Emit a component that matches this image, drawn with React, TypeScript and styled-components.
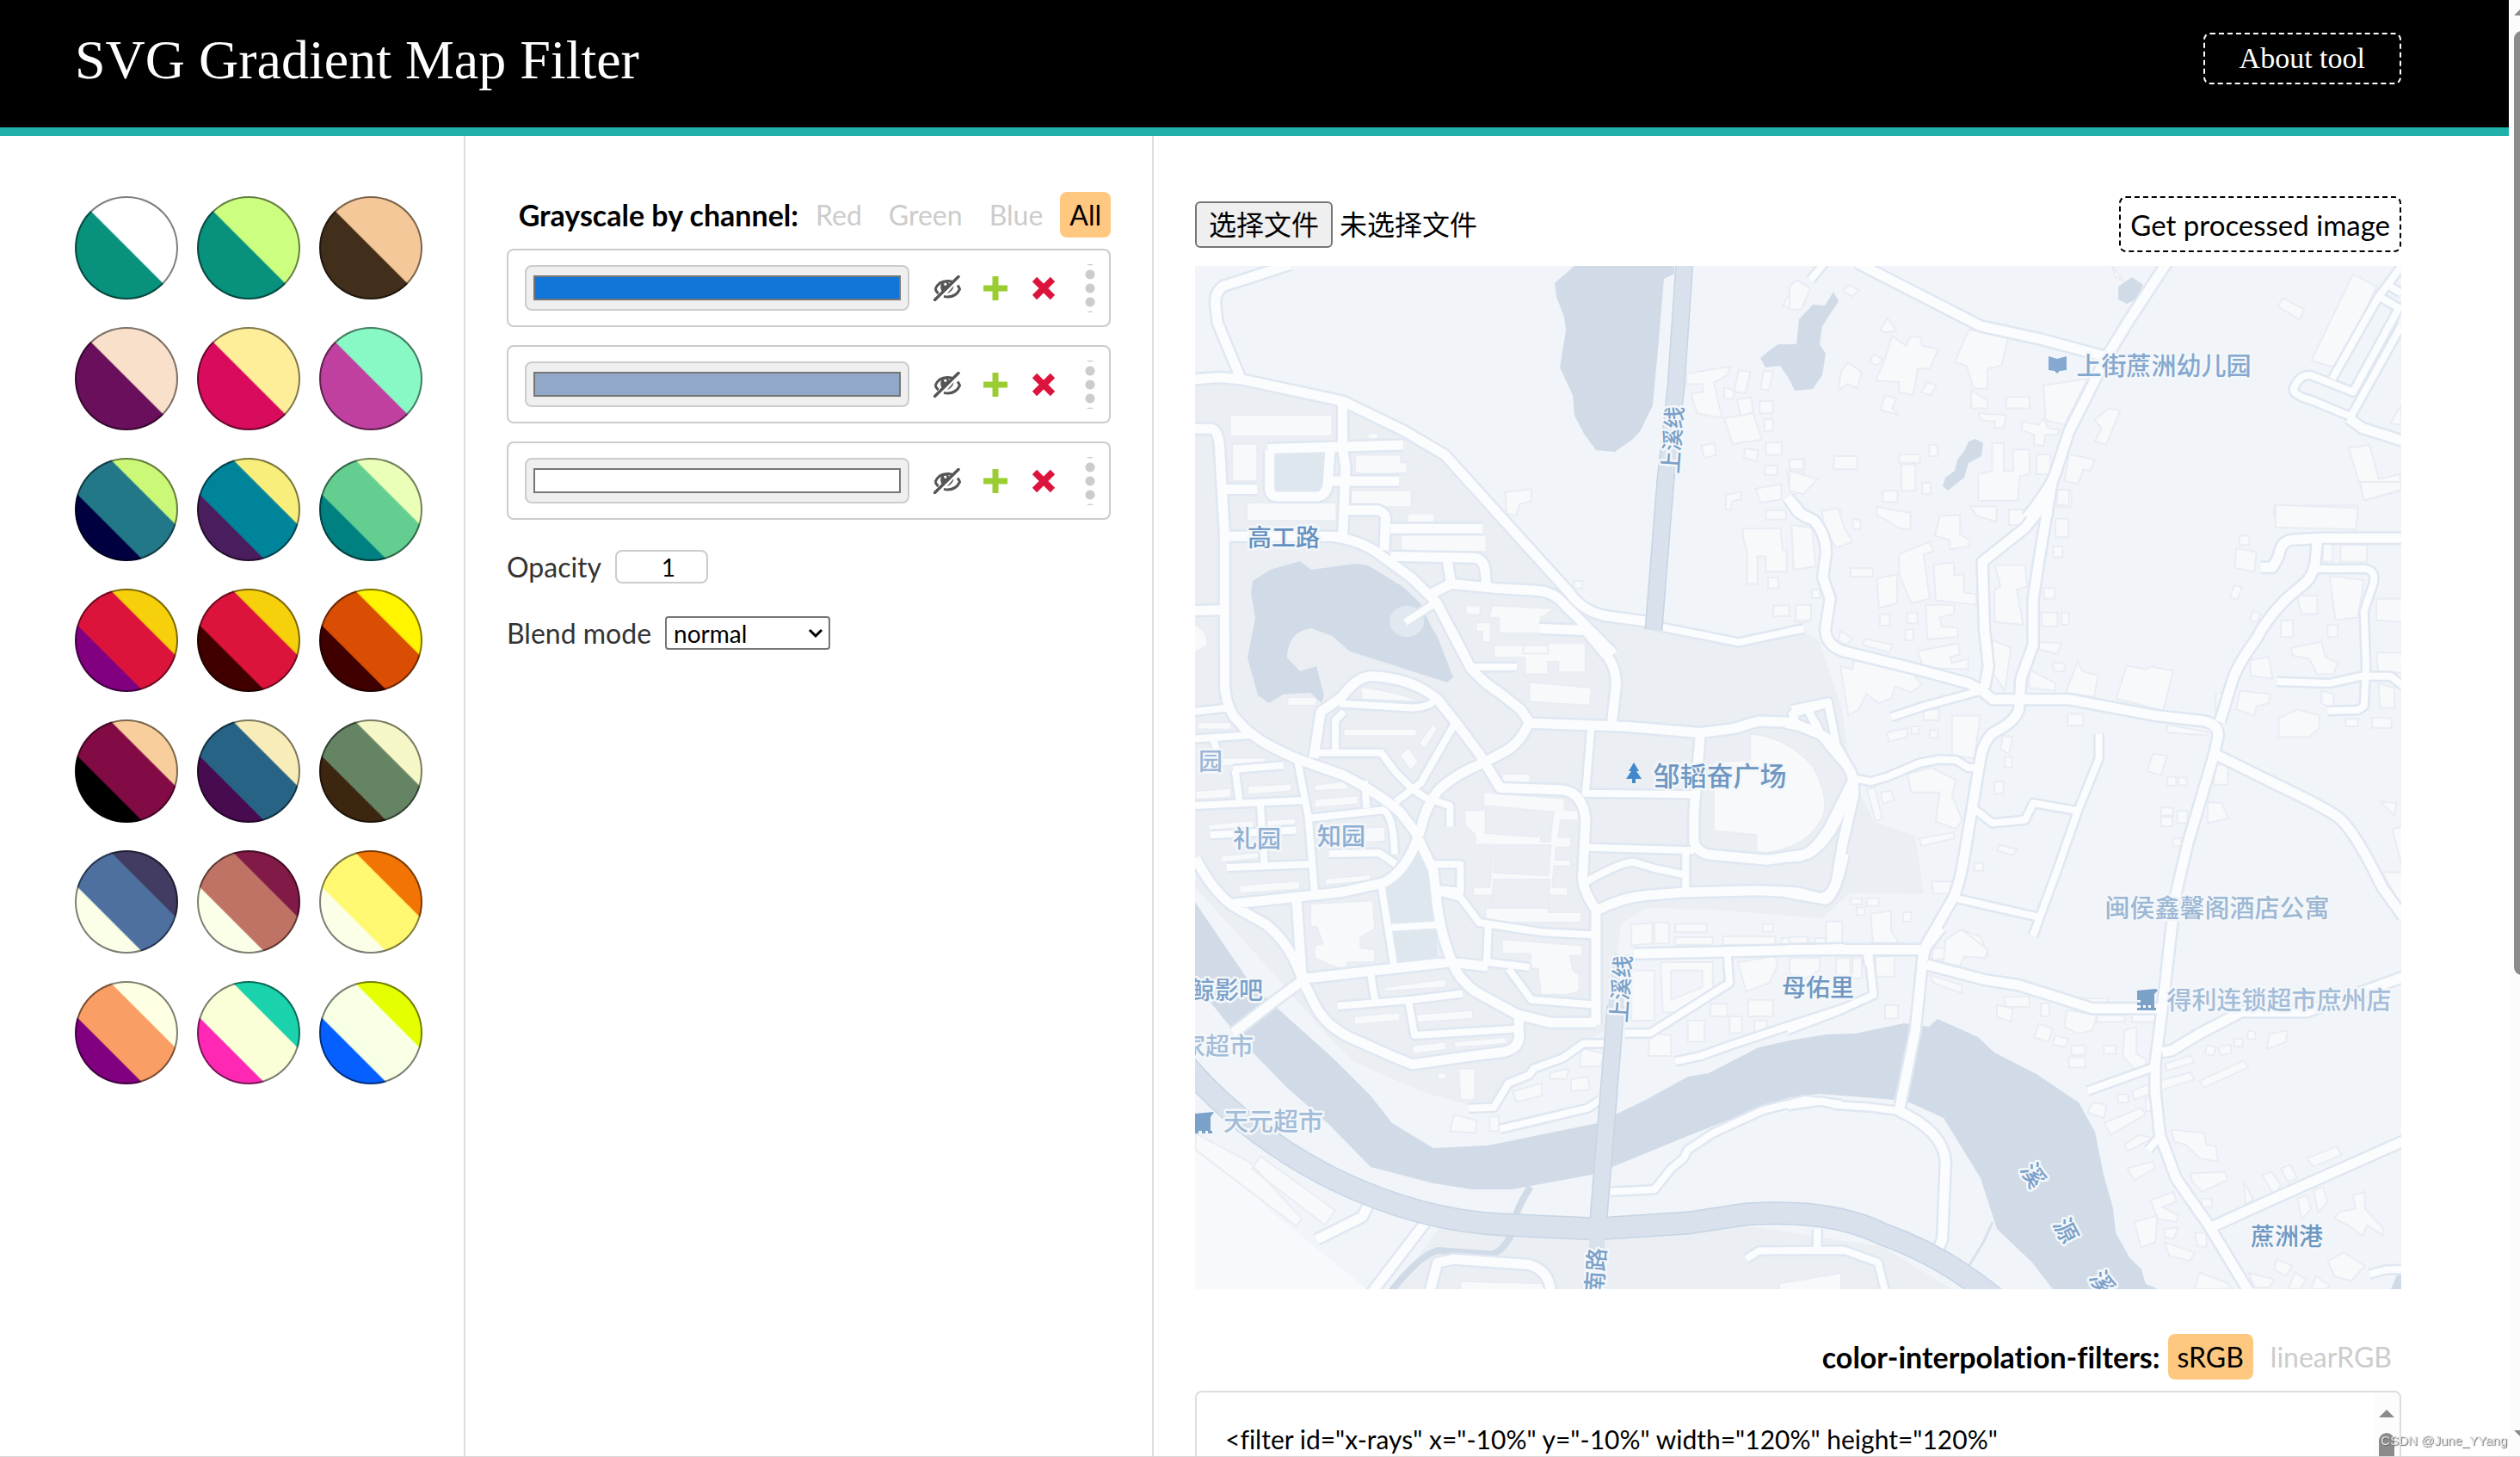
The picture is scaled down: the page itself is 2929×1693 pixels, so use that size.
import React, { useState } from 'react';
import styled, { createGlobalStyle } from 'styled-components';

const sans = '"Lato", "Noto Sans CJK SC", sans-serif';
const serif = '"Liberation Serif", serif';

const GlobalStyle = createGlobalStyle`
  *, *::before, *::after { box-sizing: border-box; }
  html, body { margin: 0; height: 100%; }
  body { background: #fff; color: #000; font: 32px/40px ${sans}; font-variant-ligatures: none; overflow: hidden; }
  button, input, select, textarea { font-family: inherit; font-variant-ligatures: none; color: inherit; margin: 0; }
`;

const Shell = styled.div`
  display: flex;
  height: 100vh;
  border-bottom: 1px solid #d8d8d8;
`;

const Page = styled.div`
  flex: 1;
  min-width: 0;
  display: flex;
  flex-direction: column;
`;

const Header = styled.header`
  display: flex;
  justify-content: space-between;
  align-items: flex-start;
  padding: 30px 125px 38px 87px;
  background: #000;
  color: #fff;
  border-bottom: 10px solid #20b2aa;
  font-family: ${serif};
`;

const Title = styled.h1`
  margin: 0;
  font-size: 64px;
  line-height: 80px;
  font-weight: 400;
`;

const DashedButton = styled.button<{ $light?: boolean }>`
  height: ${p => (p.$light ? 60 : 65)}px;
  margin-top: ${p => (p.$light ? 8 : 0)}px;
  padding: 0 ${p => (p.$light ? 40 : 11)}px;
  border: 2px dashed currentColor;
  border-radius: 8px;
  background: none;
  color: ${p => (p.$light ? '#fff' : '#000')};
  font-family: ${p => (p.$light ? serif : 'inherit')};
  font-size: ${p => (p.$light ? 34 : 33)}px;
  line-height: 40px;
`;

const Columns = styled.main`
  flex: 1;
  min-height: 0;
  display: grid;
  grid-template-columns: 541px 800px minmax(0, 1fr);
`;

const Presets = styled.section`
  display: grid;
  grid-template-columns: repeat(3, 120px);
  grid-auto-rows: 120px;
  gap: 32px 22px;
  align-content: start;
  padding: 70px 0 0 87px;
  border-right: 2px solid #ddd;
`;

const Swatch = styled.button<{ $fill: string }>`
  padding: 0;
  border: 2px solid rgba(0, 0, 0, 0.5);
  border-radius: 50%;
  background: ${p => p.$fill} border-box;
`;

const Controls = styled.section`
  padding: 65px 48px 0;
  border-right: 2px solid #ddd;
`;

const OptionRow = styled.div`
  display: flex;
  justify-content: flex-end;
  align-items: center;
  gap: 9px;
  margin-bottom: 13px;
`;

const OptionTitle = styled.strong`
  font-size: 34px;
  font-weight: 700;
`;

const Pill = styled.button<{ $active: boolean }>`
  height: 53px;
  padding: 0 11px;
  border: 0;
  border-radius: 8px;
  background: ${p => (p.$active ? '#ffc880' : 'transparent')};
  color: ${p => (p.$active ? '#000' : '#ccc')};
  font-size: 32px;
  line-height: 40px;
`;

const ColorList = styled.ul`
  display: grid;
  gap: 21px;
  margin: 0 0 35px;
  padding: 0;
  list-style: none;
`;

const ColorItem = styled.li`
  display: flex;
  align-items: center;
  height: 91px;
  padding: 0 14px 0 19px;
  border: 2px solid #ccc;
  border-radius: 8px;
`;

const ColorInput = styled.input`
  flex: 1;
  min-width: 0;
  height: 53px;
  padding: 0;
  margin-right: 16px;
  border: 2px solid #ccc;
  border-radius: 8px;
  background: #efefef;
  &::-webkit-color-swatch-wrapper { padding: 10px 8px; }
  &::-webkit-color-swatch { border: 2px solid #767676; border-radius: 0; }
`;

const IconButton = styled.button`
  display: grid;
  place-items: center;
  width: 56px;
  height: 56px;
  padding: 0;
  border: 0;
  background: none;
`;

const Grip = styled.span`
  width: 16px;
  height: 56px;
  margin-left: 18px;
  background: radial-gradient(circle, #ccc 5px, transparent 6px) center / 16px 16px;
`;

const Field = styled.div`
  display: flex;
  align-items: center;
  gap: 16px;
  height: 39px;
  margin-bottom: 38px;
  color: #333;
`;

const NumberInput = styled.input`
  width: 108px;
  height: 39px;
  padding: 0 36px 0 8px;
  border: 2px solid #ccc;
  border-radius: 8px;
  background: #fff;
  color: #000;
  font-size: 28px;
  text-align: right;
  appearance: textfield;
  &::-webkit-inner-spin-button { appearance: none; margin: 0; }
`;

const SelectBox = styled.span`
  display: grid;
  align-items: center;
  justify-items: end;
  & > * { grid-area: 1 / 1; }
  & > svg { margin-right: 8px; pointer-events: none; }
`;

const Select = styled.select`
  width: 192px;
  height: 39px;
  padding: 0 8px;
  border: 2px solid #767676;
  border-radius: 4px;
  background: #fff;
  color: #000;
  font-size: 28px;
  appearance: none;
`;

const Preview = styled.section`
  display: flex;
  flex-direction: column;
  min-height: 0;
  padding: 70px 125px 0 48px;
`;

const FileRow = styled.div`
  display: flex;
  justify-content: space-between;
  align-items: center;
  margin-bottom: 16px;
`;

const FilePicker = styled.label`
  display: flex;
  align-items: center;
  gap: 8px;
  input { position: absolute; width: 1px; height: 1px; opacity: 0; }
`;

const FileFace = styled.span`
  padding: 5px 14px;
  border: 2px solid #767676;
  border-radius: 6px;
  background: #efefef;
`;

const MapPicture = styled.svg`
  display: block;
  flex: none;
  width: 100%;
  height: auto;
  margin-bottom: 52px;
  font-family: "Noto Sans CJK SC", sans-serif;
`;

const CodeBox = styled.div`
  flex: 1;
  min-height: 0;
  display: flex;
  border: 2px solid #ddd;
  border-bottom: 0;
  border-radius: 8px 8px 0 0;
  overflow: hidden;
`;

const Code = styled.textarea`
  flex: 1;
  height: 160px;
  padding: 34px 33px 0;
  border: 0;
  outline: 0;
  resize: none;
  background: #fff;
  color: #000;
  font-size: 30px;
  line-height: 40px;
`;

const CodeScroll = styled.div`
  display: flex;
  flex-direction: column;
  align-items: center;
  gap: 18px;
  width: 30px;
  padding-top: 20px;
  background: #fcfcfc;
  & > * { flex: none; }
`;

const Thumb = styled.span`
  width: 18px;
  height: 200px;
  border-radius: 9px;
  background: #8b8b8b;
`;

const PageScroll = styled.div`
  display: flex;
  flex-direction: column;
  align-items: flex-start;
  gap: 18px;
  width: 13px;
  padding: 9px 0 21px 6px;
  overflow: hidden;
  background: #fcfcfc;
  & > svg { flex: none; }
`;

const PageThumb = styled.span`
  flex: none;
  width: 18px;
  height: 66%;
  margin-bottom: auto;
  border-radius: 9px;
  background: #8b8b8b;
`;

const Watermark = styled.span`
  position: fixed;
  right: 15px;
  bottom: 9px;
  color: #e4e4e4;
  font: 15px/20px "Liberation Sans", sans-serif;
  text-shadow: 1px 1px 1px #666;
`;

const presets: string[][] = [
  ['#08917c', '#ffffff'], ['#08917c', '#ccff80'], ['#412e1b', '#f5c899'],
  ['#6a0f5b', '#f8e0ca'], ['#d80b5c', '#ffee99'], ['#bf409f', '#88f8c4'],
  ['#000040', '#227788', '#ccf878'], ['#4a1d5e', '#008499', '#f8ee7c'], ['#008080', '#63ce90', '#eaffb8'],
  ['#800080', '#dc143c', '#f7d00c'], ['#400000', '#dc143c', '#f7d00c'], ['#400000', '#da4e04', '#fff500'],
  ['#000000', '#820a45', '#f8cf9c'], ['#480b50', '#266384', '#f8edb8'], ['#3d2610', '#648464', '#f5f7c6'],
  ['#fbffe8', '#4d709f', '#423b62'], ['#fbffe8', '#bf7364', '#821a48'], ['#fbffe8', '#fff870', '#f27405'],
  ['#800080', '#f99e64', '#ffffe4'], ['#ff28b4', '#faffd8', '#1ad2ac'], ['#0560ff', '#f7ffe4', '#e4ff00'],
];

const stripes = (c: string[]) =>
  c.length === 2
    ? `linear-gradient(45deg, ${c[0]} 50%, ${c[1]} 51%)`
    : `linear-gradient(45deg, ${c[0]} 33%, ${c[1]} 34%, ${c[1]} 66%, ${c[2]} 67%)`;

const HideIcon = () => (
  <svg width="32" height="30" viewBox="0 0 32 30" fill="none" stroke="#555">
    <path d="M2 16C5 9 10 6.500 16 6.500c2 0 4 .3 6 1M28 11.500c1 1.300 2 2.800 2.500 4.500-3 6.500-8 9-14 9-1.600 0-3-.2-4.500-.6M2 16c1 2 2 3.600 3.600 5" strokeWidth="3" />
    <path d="M9 9.500c-1.400 4-1 7.500 1.500 10l8-9.500a5 5 0 0 0-5-3c-2 0-3.500 1-4.500 2.500z" fill="#555" stroke="none" />
    <path d="M23.500 9.500c.6 5-2 9.500-7.500 11.500l7.500-9" fill="#555" stroke="none" />
    <path d="M12.500 11l2.500-1.500" stroke="#fff" strokeWidth="3" />
    <path d="M1.500 28.500 29 1.500" strokeWidth="3.500" strokeLinecap="round" />
    <path d="M6 28 29.500 5" stroke="#fff" strokeWidth="1.500" />
  </svg>
);
const PlusIcon = () => (
  <svg width="28" height="28" viewBox="0 0 28 28" stroke="#9acd32" strokeWidth="7">
    <path d="M14 0v28M0 14h28" />
  </svg>
);
const CrossIcon = () => (
  <svg width="28" height="28" viewBox="0 0 28 28" stroke="#dc143c" strokeWidth="7.500">
    <path d="M3.500 3.500l21 21M24.500 3.500l-21 21" />
  </svg>
);
const Triangle = ({ down }: { down?: boolean }) => (
  <svg width="18" height="9" viewBox="0 0 18 9" fill="#8b8b8b">
    <path d={down ? 'M0 0h18L9 9z' : 'M0 9h18L9 0z'} />
  </svg>
);

/* The map is surveyed in sheets; each sheet keeps its own grid and is placed by its transform. */
type Sheet = { place: string; blocks: string; pale?: string; roads: string; lanes: string };

const sheets: Sheet[] = [
  {
    place: 'translate(-49 -109) scale(.4847 .3571)',
    pale: 'M290 915H410V1020L395 1045H290z',
    blocks:
      'M185 790h245v70H185zM190 885h60v120h-60zM485 920h110v25h15v35H485zM475 1035h145v55H475zM225 1075h215v60H225zM595 1180h205v55H595zM610 1110h65v30h-65zM515 850h25v18h-25zM60 1480a45 60 0 0 1 70 60l-50 40zM750 1410h35v30h-35zM815 1410L965 1420 930 1450V1500H830V1450H805zM775 1465h35v65h-20v-35h-15zM820 1540H1040V1570H820z' +
      'M845 1040L908 1032V1070L880 1080 870 1120 848 1110zM1280 655L1385 632 1378 660 1345 685 1365 800 1305 785 1290 720 1320 715 1318 690 1280 690zM1405 645l28 5-12 70-28-5zM1465 645l22 5-10 60-20-5zM1370 700l25 10-5 30-20-5zM1400 740l35-8 5 50-30 10zM1455 745h32v40h-32zM1370 800L1440 785 1460 870 1390 885zM1465 805l22-3v38l-20 5zM1315 890l32-8 3 40-28 8zM1420 900l32 5-5 35-30-10zM1470 880h38v40h-38zM1468 955h30v30h-30zM1535 935h28v30h-28zM1520 975h40v60l-30 20zM1375 1050l35-10v25l-20 5-5 30-12-2zM1445 1030l62-15v50l-50 10zM1470 1100h48v30h-48zM1415 1160H1505L1510 1230H1520V1300H1470V1250H1450V1340H1425V1235L1415 1190zM1535 1150h33v140h-33zM1475 1320h25v35h-25zM1488 1410h38v35h-38zM1540 1415h30v50h-30zM1540 360l28 10-5 60-25 15-28-10zM1010 1330h20v25h-20z',
    roads:
      'M330 300L240 340 170 370Q148 390 150 430L155 490 210 670M90 675L160 668 215 675 455 745 600 840 700 920 740 980 1000 1370Q1030 1430 1090 1445L1200 1465M90 835H140Q158 840 160 900L172 1180V1570M172 1185H430Q500 1200 540 1240L620 1320 680 1400 745 1568M455 750V900L462 960 455 1190M275 900L600 888M280 905V1030Q280 1055 300 1056H395Q420 1050 420 1000L425 905M430 1005H590M460 1100H540Q560 1110 558 1130L555 1230M570 1160H790M570 1250L770 1255Q795 1260 797 1300L800 1350M706 1262L715 1340 670 1370M715 1340L830 1355 930 1363Q965 1370 985 1405L1105 1568M175 1032H250M90 1427L165 1425M925 1485L1045 1492',
    lanes: 'M1200 1475L1405 1530 1560 1485M680 1400L605 1465M1525 1070L1545 1110 1570 1130',
  },
  {
    place: 'translate(-9 431) scale(.4847)',
    pale: 'M545 490L580 560 595 640 600 770 495 785 475 600 510 560z',
    blocks:
      'M1350 232Q1440 240 1500 310 1545 390 1520 440 1480 510 1380 518L1365 515V475L1262 465V300L1350 295zM735 20H805V40H865V15H955V85H890V60H865V90H810V50H735zM820 108L970 122 965 165 820 155zM375 220H550V238H375zM755 328H822V350H755zM240 145H310V165H240zM415 120Q500 130 560 155L420 150zM25 205H105V222H25zM510 285L530 265 555 300 535 320zM555 255L590 208 600 220 570 268z' +
      'M665 415H710V372L905 388V415H938V440H895L890 480H920V505H885L882 535H920V550H880L875 600H912V620H870L865 660H945V685H715V650H865L870 582H735L728 650 735 620H685V600H725L735 498H690V475L665 450zM715 405V470L840 480 845 458 848 490 870 490 878 420zM740 500L735 565 865 572 872 500z' +
      'M295 640L445 632 450 700 415 720V745L450 750V780H385L380 795 350 790 305 770V740L325 735 310 695H295zM755 725L950 740 945 765 918 765 925 800 940 810V850L910 858H848L840 795H825L822 760H755zM80 290L190 290 185 305 80 310zM20 370L105 362V385L20 390zM145 358L250 352V370L145 378zM50 450L160 440V460L50 465zM190 440L260 435V450L190 455zM80 525L185 515V530L80 540zM125 595L270 585V605L125 615zM305 355L385 345V365L305 370zM305 390L410 380V400L305 410zM385 460L475 455V490L385 495zM330 580L440 570V585L330 595zM470 840L620 820V840L475 850zM400 910L510 900V920L400 930zM545 905L685 895V915L550 925zM540 980L620 970V990L540 1000zM640 970L765 960V975L640 985zM650 1035H690V1110H655zM600 1045h20v15h-20z' +
      'M1065 690L1115 685V735L1065 740zM1120 685H1155V735H1120zM1170 688H1245V708H1170zM1170 720H1260V738H1170zM1285 718H1410V738H1285zM1380 688h25v18h-25zM1425 722h65v15h-65zM1505 722h25v15h-25zM1540 690h28v40h-28zM1135 780H1260V850L1190 900H1140zM1160 800V870L1235 840V800zM1065 800H1120V920H1065zM1320 780L1410 765 1415 790 1395 830 1340 850zM1345 870h60v40h-60zM1360 920h30v30h-30zM1110 950L1160 955V1005H1105zM1200 920h40v50h-40zM1255 880h40v30h-40zM1300 910h30v40h-30zM945 985L1000 1000 990 1030 940 1030zM920 1060L960 1055 965 1085 920 1090zM870 1045L915 1035 910 1060 870 1060zM780 1090L850 1070V1100L790 1115zM640 1145L695 1160 690 1190 630 1185zM725 1150h22v35h-22zM20 1190L150 1260 275 1395 260 1412 20 1230zM175 1245L355 1375 330 1410 155 1275zM655 1545L860 1550V1570H655zM1420 1550L1568 1525V1570H1420z',
    roads:
      'M90-10V120Q95 180 125 205 160 250 270 295L370 330Q460 375 510 420L545 465 590 560 600 650Q610 720 635 780 650 820 690 850L790 905 870 925H980M630-20L680 75Q710 110 750 135L800 175 820 205M960-10L1010 50Q1030 80 1028 120L1018 205M820 207L1050 215 1230 230 1310 220 1370 202 1450 205 1520 235 1575 300M820 205Q800 250 770 270L715 300Q640 330 600 370 570 410 560 460 530 560 470 590L370 612 110 640M303 290L320 180 370 145Q410 90 450 95 540 100 600 150L640 200 700 280 750 362 900 367Q950 375 955 440L948 580Q950 610 980 655V930M1230 235L1215 420V490Q1220 515 1250 522L1390 535 1490 520Q1550 480 1575 390M980 657Q1040 625 1100 620L1200 612 1370 608 1460 612 1530 630Q1555 620 1575 520M20 530Q60 610 110 645L190 690Q250 740 275 820L310 890Q340 940 400 965L490 1005 540 1025 680 1005 760 995Q800 985 795 950V900M262 630L275 820 450 800 630 780 720 790M275 825L200 880 110 950M1070 760L1575 748M310 1445L420 1390 435 1360M440 1575L570 1405M580 1575L600 1500 640 1492 820 1505Q870 1520 872 1575',
    lanes:
      'M680 72H790M365 160L540 170Q580 168 590 155M355 270V200L375 180M310 278H465L500 325 540 365 570 385 630 405V455M640 210L560 350 500 395M968 220L955 375 1210 378M960 505L1215 512M955 588Q1040 540 1070 540L1120 555 1190 570M1195 515V610M10 180L100 170M10 245L155 235M62 245L70 270M265 300L290 430 305 610M10 405L280 392M110 318L230 308M115 320L125 395M175 400L185 545M95 553L295 545M55 475L260 463M290 435L470 415Q495 430 497 520M425 345L430 410M340 520L460 518 500 545M440 810L450 870M360 885L540 870 660 855M530 870L545 955 790 940M465 595L495 785M490 697L600 690M590 545H655V610L605 605M600 610L655 625 700 685 850 708 980 715M722 690L718 780L820 792M770 795L825 870 975 882M1295 760L1300 830 1110 950H1050M675 1130L735 1128 770 1070 820 1050 830 1035 900 1010 950 975H1005M750 1180L960 1130 990 1110M1015 1330L1120 1325 1160 1275 1190 1250 1200 1230 1260 1190 1380 1135 1480 1110 1568 1120M1170 1018L1230 1005 1300 980 1420 940 1575 890M1340 1492L1370 1472 1575 1470M1510 1425V1470M1460 200L1450 185 1535 160 1555 250M1490 180L1520 240',
  },
  {
    place: 'translate(691 -309) scale(.5414 .3827)',
    blocks:
      'M1210 832L1260 870 1180 1120 1120 1095zM1060 905L1105 940 1095 970 1048 930zM690 800L715 850 700 840zM0 870L15 850 45 875 25 940 0 940zM125 865l25 15-15 20-20-15zM210 965L230 1005 205 1010 195 1000zM220 1020L250 1050 260 1020 280 1025 285 1050 320 1060 300 1120 275 1120 265 1200 235 1190V1160L185 1155 205 1090zM385 1000L470 1020 455 1110 425 1120V1180L395 1180 380 1110 355 1100zM125 1100L155 1130 145 1180 125 1165 105 1185 110 1130zM180 1075l20 15-10 20-18-10zM295 1160l20 10-12 30-20-8zM205 1200L230 1210 220 1240 235 1260 195 1245zM390 1185L425 1215V1240H390zM465 1205h50v35h-50zM405 1255L465 1260 460 1300 440 1300V1280L410 1275zM545 1170L640 1150 590 1290 550 1275zM500 1280L535 1290 545 1270 555 1300 580 1305 575 1320 550 1320 545 1355 525 1350V1320L498 1305zM685 1240L710 1245 680 1350 655 1340 670 1300 655 1275zM300 1350h18v35h-18zM95 1385h50v40H95zM235 1380h45v25h-45zM240 1410h30v80h-30zM285 1465h18v35h-18zM200 1490h32v35h-32zM435 1345H460V1430H480V1365H515V1440L495 1445 490 1520H405V1440L435 1430zM530 1380h30v60h-30zM600 1380L655 1395 645 1430 630 1425 620 1470 590 1460zM575 1490h30v50h-30zM1200 1360L1245 1350 1265 1455 1310 1440 1313 1490 1235 1520zM1040 1535h180v35h-180zM1313 1230L1290 1285 1313 1290zM0 1395h30v30H0zM0 1430L60 1455 30 1500 0 1490zM70 1550h40v20H70z',
    roads:
      'M145 798L300 910 410 990 540 1030 685 1085M810 798L730 970 680 1085 650 1170 600 1310 570 1440Q560 1480 510 1570M1200 1270L1230 1300 1320 1340',
    lanes:
      'M75 798L45 850M560 1470L555 1570M1313 810L1265 900 1165 1150M1265 900L1308 935 1210 1190 1120 1140Q1095 1135 1082 1180 1080 1200 1120 1215L1205 1265 1313 990M1290 870L1313 890',
  },
  {
    place: 'translate(691 251) scale(.4719 .3571)',
    blocks:
      'M1197 75L1400 85 1395 155 1197 148zM1405 0L1415 60 1506 25V0zM1100 215L1150 228 1145 292 1097 280zM1108 175h24v30h-24zM1095 335l20 8-12 40-18-8zM1313 200h25v60h-25zM1357 205h65v55h-65zM1330 305L1415 320 1400 440 1345 450zM1445 380H1510V455L1445 450zM1445 555H1510V620H1450zM1250 370h50v60h-40zM1210 450h30v55h-30zM1325 465h25v40h-25zM1235 540L1310 520 1320 570 1350 590 1340 625 1300 625 1280 575 1240 565zM1135 580L1180 570 1190 640 1135 630zM1110 680L1185 690 1180 720 1150 730 1145 760 1100 740zM1205 770L1250 740 1305 760V800L1280 830H1205zM1310 680L1340 690V740L1310 720zM1450 655L1490 670V735H1455zM1435 768h48v32h-48zM1370 770h30v25h-30zM1140 420l20 8-8 30-18-8zM830 598L880 610 890 600 945 615 920 745 805 705zM710 585L720 615 760 630 750 700 680 685zM895 885L930 890 915 955 880 940zM930 960h22v28h-22zM958 962h20v25h-20zM685 755h38v38h-38zM930 790L1030 815V825L930 815zM1050 690L1065 685V760H1050zM915 1060h30v25h-30zM915 1090h28v30h-28zM955 1070h25v40h-25zM945 1160h20v25h-20zM1030 1040L1065 1045 1080 1095 1030 1110zM1045 920h35v65h-35zM1455 1040L1495 1045 1490 1085zM1485 1130L1510 1120V1260zM1460 1270H1510V1390z' +
      'M80 95L120 85 135 150 155 195 115 215 85 150zM5 140L55 150 65 275 10 285zM155 120l20 5v30l-18-3zM215 80L245 90 298 100V155L270 150 240 125 215 110zM370 110L420 108V170L445 190 440 210 395 220V190L358 175zM270 235L345 195 355 225 330 235 345 380 300 395 270 300zM150 280h55v28h-55zM215 315L265 300V395L220 410zM355 270L405 262V305L430 300V360L460 365V400L360 385zM335 400L405 400V430L370 440 375 470 415 475V505L340 512zM505 270L580 270 585 340 560 350 575 465 505 455V350L520 340zM445 80L510 80V130L460 110zM540 90h45v50h-45zM660 25h28v50h-30zM655 120h32v60h-32zM650 210h22v35h-22zM625 345h28v35h-25zM620 425h40v45h-38zM670 425h18v40h-18zM290 425h25v35h-25zM222 430h25v38h-25zM285 480h20v35h-20zM15 400h38v50H15zM55 350h20v28H55zM185 510L255 530 245 555 180 530zM125 485L155 510 140 530 120 515zM315 550L415 525 420 560 395 570 400 590 440 575V610L330 605zM160 575L200 590 240 600 300 615 325 660 300 685 260 665 250 705 220 720 190 690 170 740 145 760 125 600 155 610zM500 515L545 540 530 680 500 620zM610 520L670 525 660 560 615 545zM590 610L655 655V680L590 670zM650 585l30 8-5 25-25-5zM330 740h38v35h-38zM240 815l50-15v30l-45 15zM345 808h20v25h-20zM300 795h18v25h-18zM400 760H470L455 900 400 890zM525 825L550 830 540 885 520 870zM530 895h18v35h-18zM505 975h22v40h-22zM290 950L350 930 410 970 400 1020 425 1100 410 1130 360 1105 370 1010 300 1010zM190 1000L210 995 228 1095 212 1105zM225 1010l25-5 8 30-28 12zM320 1160L405 1140V1160L325 1185zM515 1180L560 1195 550 1215 512 1200zM455 1240h22v25h-22zM350 1300h50v40h-45zM150 1355h28v20h-28zM190 1355h30v25h-30zM165 1385h20v25h-20zM90 1430H130V1500H90zM200 1405L250 1395V1460L270 1500H205zM280 1400h20v30h-20zM0 1480h45v25H0zM430 1460L470 1480 490 1540 430 1535 350 1560 355 1515 410 1520z',
    roads:
      'M-5 50L30 105 60 125Q90 170 90 230L82 310 100 380 88 480Q90 530 130 550L300 605 440 655 470 675 500 708H690L900 760 1020 778Q1060 790 1055 830M648-10L640 50 615 250 600 380V530L570 640 565 740Q555 780 510 810 480 830 470 900L455 1020 430 1220Q420 1300 405 1350L335 1510 325 1575M640 50L580 150 475 260 480 480 490 600 480 670M-10 785Q60 800 110 850L140 920Q160 950 158 1020L130 1180 115 1300Q100 1365 60 1352L-10 1335M155 975L100 1120Q60 1210 20 1220H-10M1300 190L1295 260Q1290 310 1260 340 1190 410 1150 510 1100 600 1090 650L1060 780M1055 830L1045 890 980 1180 950 1350 930 1575M1055 890L1200 985Q1320 1060 1350 1090 1390 1130 1460 1320L1512 1415M0 1522H335M1512 183H1310L1240 188Q1210 190 1205 240L1190 278H1160',
    lanes:
      'M160 965L200 975 240 960 320 915 370 903 410 905 440 930H465M470 680L330 730 250 765M455 1065L500 1110 580 1100 600 1045 710 1070M762 820V900L710 1070 660 1260 600 1475M410 1355L610 1415M1300 283H1420Q1445 290 1438 330L1415 420 1420 600 1415 730 1400 742 1325 745M1200 650L1330 655 1410 632H1480L1512 665M190 1530L195 1575M-5 487L35 478M5 740L95 715 115 850M45 740L75 810',
  },
  {
    place: 'translate(691 771) scale(.5414 .3909)',
    blocks:
      'M335 30L370 0 425 60 420 85 375 80 365 110 330 100zM460 200h55v30h-50zM445 225l35 10-5 40-30-15zM540 220h18v38h-18zM535 280L565 295 555 335 525 320zM570 315l28 10-5 25-28-8zM605 345h30v28h-30zM600 380h35v30h-35zM595 240L660 255 650 300 620 310 590 290zM615 205H685L680 225 640 220zM675 345h25v25h-25zM720 300L745 290V370L765 385V415H740L715 375zM660 255h60v20h-60zM735 245h50v30h-50zM205 225h28v40h-28zM300 135L370 165V190L310 160zM0 85H65V120L30 150 0 130zM100 85h30v50l-30 10zM135 85h20v60h-20zM185 80h40v60h-40z' +
      'M1030 310L1070 300 1065 335 1025 355zM985 300l15 5v22l-18-2zM955 325h18v22h-18zM920 350l28-8v25l-22 8zM895 345l20 5-5 25-18-5zM805 400L860 375 870 395 810 420zM880 450L975 390 985 410 890 470zM780 455L860 425 870 445 740 505 735 480zM650 515L680 520 675 560 640 545zM675 575L755 530 765 550 690 610zM705 490h22v25h-22zM765 500h15v40h-15zM720 640L750 610 780 620 725 660zM725 710L780 690 785 710 740 745zM775 805L825 780 830 810 800 825 835 850 830 870 790 860zM740 870L790 850 785 930 755 945zM805 890l30-5-10 35-20-5zM805 930L870 960 860 985 815 970zM870 900l25 5v40l-20-5zM820 595L890 605 895 640 915 645 920 690 880 680 850 640 825 630zM860 725L935 720 940 745 885 780 865 750zM885 800h22v25h-22zM975 750L995 800 980 820zM1015 730L1035 720 1055 760 1040 790zM1055 710L1075 700 1090 740 1070 750zM1110 680L1175 645 1185 670 1125 705zM1090 800L1110 790 1120 830 1100 860zM1125 775L1145 765 1155 810 1135 840zM1210 790L1235 780V830L1275 890V910L1240 880 1230 910 1200 880 1170 860 1180 840 1215 830zM1155 985L1190 960 1235 1000 1205 1045 1170 1030zM1045 980L1080 1000 1065 1030 1040 1010zM985 1020L1040 1040 1030 1065 1000 1065zM880 1020L940 1050 950 1069H870zM1085 1020L1110 1040 1095 1069H1070zM1130 1030L1160 1060 1150 1069H1120z',
    roads:
      'M325-5L288 60 270 300 235 540M-5 60H285M295 105L420 150 490 165 560 195 650 235H800M820-5L805 180 785 400V480L795 610 830 740 900 880 985 1075M800 365L820 360 880 310 970 245H1110L1320 140M905 885L1040 800 1320 628M235 540Q330 600 335 690L328 920 318 955',
    lanes:
      'M170 65L180 195 100 245-5 300M-5 525L70 510 100 522 170 528 235 540M640 480L700 450 785 408M795 615L770 655M-5 955H120L190 990 205 1075M60 890V945M1245 1025L1280 1012 1320 1010M530-5L522 18',
  },
];

const layers: { key: 'roads' | 'lanes'; color: string; width: number }[] = [
  { key: 'lanes', color: '#dfe7f1', width: 13 },
  { key: 'roads', color: '#dfe7f1', width: 16 },
  { key: 'lanes', color: '#fbfcfe', width: 8 },
  { key: 'roads', color: '#fbfcfe', width: 11 },
];

const labels: { t: string; x: number; y: number; s?: number; c?: string; r?: number; end?: boolean }[] = [
  { t: '高工路', x: 103, y: 314, c: '#6391c0' },
  { t: '上溪线', x: 553, y: 202, s: 26, r: -86 },
  { t: '上溪线', x: 493, y: 840, s: 26, r: -86 },
  { t: '南路', x: 464, y: 1168, s: 27, r: -86 },
  { t: '园', x: 18, y: 574, c: '#9db8d6' },
  { t: '礼园', x: 72, y: 664, c: '#8eaed2' },
  { t: '知园', x: 170, y: 661, c: '#8eaed2' },
  { t: '鲸影吧', x: 79, y: 840, end: true },
  { t: '家超市', x: 68, y: 905, c: '#a3bcd8', end: true },
  { t: '天元超市', x: 91, y: 992, c: '#a3bcd8', s: 29 },
  { t: '邹韬奋广场', x: 610, y: 590, s: 31, c: '#6f97c2' },
  { t: '上街蔗洲幼儿园', x: 1126, y: 114, s: 29, c: '#84a8cf' },
  { t: '闽侯鑫馨阁酒店公寓', x: 1188, y: 744, s: 29, c: '#9cb7d4' },
  { t: '母佑里', x: 724, y: 837, c: '#6f97c2' },
  { t: '得利连锁超市庶州店', x: 1260, y: 851, s: 29, c: '#a3bcd8' },
  { t: '蔗洲港', x: 1269, y: 1126, c: '#6f97c2' },
  { t: '溪', x: 976, y: 1056, r: 60 },
  { t: '源', x: 1014, y: 1120, r: 62 },
  { t: '溪', x: 1056, y: 1181, r: 58 },
];

const water = [
  'M441 0L418 20 420 36 429 59 431 75 424 118 439 150 441 174 452 195 466 214 488 216 508 202 518 191 532 162 539 87 545 15 557 9V0z',
  'M65 380L67 366 87 353 122 343 135 353 186 346 201 348 242 373 262 392 275 420 282 431 300 478 293 484 180 448 159 430 135 421Q108 425 107 455L122 471 141 465 150 499 147 508 134 496 102 498 86 508 73 499 61 455 70 409z',
  'M742 30L748 41 729 70 726 91 733 102 729 127 718 143 697 145 691 132 680 116 663 118 657 107 668 98 678 91H699L702 62 718 45 732 46z',
  'M899 204L907 201 916 206 914 221 899 229 894 246 875 261 869 256 872 246 883 238 886 225 894 215z',
  'M1089 13L1102 22 1094 39 1083 44 1073 39V24z',
  'M0 739L44 804 64 833 95 862 161 921 204 964 229 996 277 1025 340 1022 468 996 524 969 573 942 597 938 655 908 691 900 734 893 767 892 824 880 853 884 863 875 910 896 929 914 978 939 1027 972 1046 1006 1056 1056 1067 1095 1070 1123 1086 1152 1100 1166 1105 1183 1120 1189H997L973 1158 932 1119 913 1060 870 990 826 970 726 962 691 966 641 984 568 1013 485 1047 461 1056 369 1073H321L277 1066 204 1047 156 998 107 955 69 916 35 877 0 833z',
  'M1402 1160L1390 1189H1402z',
];

const campus =
  'M0 133L55 132 172 157 290 220 339 277 436 380 474 405 533 420 630 437 707 423 726 437 752 515 762 594 790 646 837 662 847 730 762 728 729 758 691 755 600 748 524 746 495 765 480 887 447 904 393 935 350 974 320 976 262 959 185 925 151 891 88 819 0 722z';
const highway =
  'M-10 930Q60 1010 161 1061 262 1110 359 1114L466 1119 573 1112 640 1102Q740 1095 799 1125 870 1150 930 1200';

const MapImage = () => (
  <MapPicture viewBox="0 0 1402 1189" role="img" aria-label="Map">
    <rect width="1402" height="1189" fill="#f1f5f9" />
    <path d={campus} fill="#ebeff4" />
    <path d="M0 1010L90 1100 200 1189H0z" fill="#f7f9fc" />
    <path d="M290 1110L466 1130 640 1115 800 1140 880 1189H230z" fill="#ebeff4" />
    {sheets.map((s, i) => (
      <g key={i} transform={s.place}>
        <path d={s.blocks} fill="#f7f9fb" fillRule="evenodd" stroke="#e9edf3" strokeWidth="2" vectorEffect="non-scaling-stroke" />
        {s.pale && <path d={s.pale} fill="#dee6ee" />}
      </g>
    ))}
    {water.map(d => <path key={d} d={d} fill="#d1dbe7" />)}
    <ellipse cx="246" cy="413" rx="20" ry="18" fill="#e2e8f0" />
    <path d="M390 1070Q370 1100 368 1125 355 1150 340 1148L282 1144Q260 1150 225 1195" fill="none" stroke="#d1dbe7" strokeWidth="8" />
    <path d="M927 1111L916 1135 897 1166" fill="none" stroke="#d8e1eb" strokeWidth="3" />
    {layers.map((l, n) => (
      <g key={n} fill="none" stroke={l.color} strokeWidth={l.width} strokeLinejoin="round">
        {sheets.map((s, i) => (
          <path key={i} transform={s.place} d={s[l.key]} vectorEffect="non-scaling-stroke" />
        ))}
      </g>
    ))}
    <g fill="none">
      <path d={highway} stroke="#c6d4e4" strokeWidth="27" />
      <path d="M569 -5L559 141 547 248 533 423M489 860L468 1119" stroke="#c6d4e4" strokeWidth="21" />
      <path d="M468 1110L465 1195" stroke="#d8e1eb" strokeWidth="18" />
      <path d={highway} stroke="#d9e2ec" strokeWidth="24" />
      <path d="M569 -5L559 141 547 248 533 423M496 800L489 860 468 1119" stroke="#d9e2ec" strokeWidth="18" />
    </g>
    <g fill="#84a8cf">
      <path d="M992 105l10 3 11-3v16l-8 1-3 3-3-3-7-1z" />
      <path d="M1095 842l22-2 2 2-4 4v16h2v3h-22v-3h4v-3h-4v-3h4v-3h-4zM1102 859v3h3v-3zM1108 859v3h3v-3zM0 985l22-2-4 6v16h2v3h-5v-3h-3v3h-4v-3H4v3H0z" fill="#7ba1c9" />
      <path d="M510 577l6 10h-3l6 9h-7v5h-4v-5h-7l6-9h-3z" fill="#4388cb" />
    </g>
    <g stroke="#f4f7fa" strokeWidth="5" strokeLinejoin="round" paintOrder="stroke" dominantBaseline="central" fontWeight="500">
      {labels.map((l, i) => (
        <text
          key={i}
          x={l.x}
          y={l.y}
          fontSize={l.s || 28}
          fill={l.c || '#7ba1c9'}
          textAnchor={l.end ? 'end' : 'middle'}
          transform={l.r ? `rotate(${l.r} ${l.x} ${l.y})` : undefined}
        >
          {l.t}
        </text>
      ))}
    </g>
  </MapPicture>
);

export default function App() {
  const [channel, setChannel] = useState('All');
  const [space, setSpace] = useState('sRGB');
  const [colors, setColors] = useState(['#1275d8', '#92a8c8', '#ffffff']);

  return (
    <>
      <GlobalStyle />
      <Shell>
        <Page>
          <Header>
            <Title>SVG Gradient Map Filter</Title>
            <DashedButton type="button" $light>About tool</DashedButton>
          </Header>
          <Columns>
            <Presets aria-label="Presets">
              {presets.map((c, i) => (
                <Swatch key={i} type="button" $fill={stripes(c)} aria-label={`Preset ${i + 1}`} onClick={() => setColors(c)} />
              ))}
            </Presets>

            <Controls>
              <OptionRow>
                <OptionTitle>Grayscale by channel:</OptionTitle>
                {['Red', 'Green', 'Blue', 'All'].map(c => (
                  <Pill key={c} type="button" $active={c === channel} onClick={() => setChannel(c)}>{c}</Pill>
                ))}
              </OptionRow>
              <ColorList>
                {colors.map((c, i) => (
                  <ColorItem key={i}>
                    <ColorInput
                      type="color"
                      aria-label={`Color ${i + 1}`}
                      value={c}
                      onChange={e => setColors(colors.map((v, n) => (n === i ? e.target.value : v)))}
                    />
                    <IconButton type="button" aria-label="Hide"><HideIcon /></IconButton>
                    <IconButton type="button" aria-label="Add"><PlusIcon /></IconButton>
                    <IconButton type="button" aria-label="Remove"><CrossIcon /></IconButton>
                    <Grip />
                  </ColorItem>
                ))}
              </ColorList>
              <Field>
                <label htmlFor="opacity">Opacity</label>
                <NumberInput id="opacity" type="number" min="0" max="1" step="0.05" defaultValue="1" />
              </Field>
              <Field>
                <label htmlFor="blend">Blend mode</label>
                <SelectBox>
                  <Select id="blend" defaultValue="normal">
                    <option>normal</option>
                    <option>multiply</option>
                    <option>screen</option>
                  </Select>
                  <svg width="18" height="12" viewBox="0 0 18 12" fill="none" stroke="#000" strokeWidth="3">
                    <path d="M2 2l7 7 7-7" />
                  </svg>
                </SelectBox>
              </Field>
            </Controls>

            <Preview>
              <FileRow>
                <FilePicker>
                  <input type="file" />
                  <FileFace>选择文件</FileFace>
                  <span>未选择文件</span>
                </FilePicker>
                <DashedButton type="button">Get processed image</DashedButton>
              </FileRow>
              <MapImage />
              <OptionRow>
                <OptionTitle>color-interpolation-filters:</OptionTitle>
                {['sRGB', 'linearRGB'].map(c => (
                  <Pill key={c} type="button" $active={c === space} onClick={() => setSpace(c)}>{c}</Pill>
                ))}
              </OptionRow>
              <CodeBox>
                <Code
                  aria-label="Filter code"
                  readOnly
                  spellCheck={false}
                  value={'<filter id="x-rays" x="-10%" y="-10%" width="120%" height="120%"'}
                />
                <CodeScroll>
                  <Triangle />
                  <Thumb />
                </CodeScroll>
              </CodeBox>
            </Preview>
          </Columns>
        </Page>
        <PageScroll>
          <Triangle />
          <PageThumb />
          <Triangle down />
        </PageScroll>
      </Shell>
      <Watermark>CSDN @June_YYang</Watermark>
    </>
  );
}
